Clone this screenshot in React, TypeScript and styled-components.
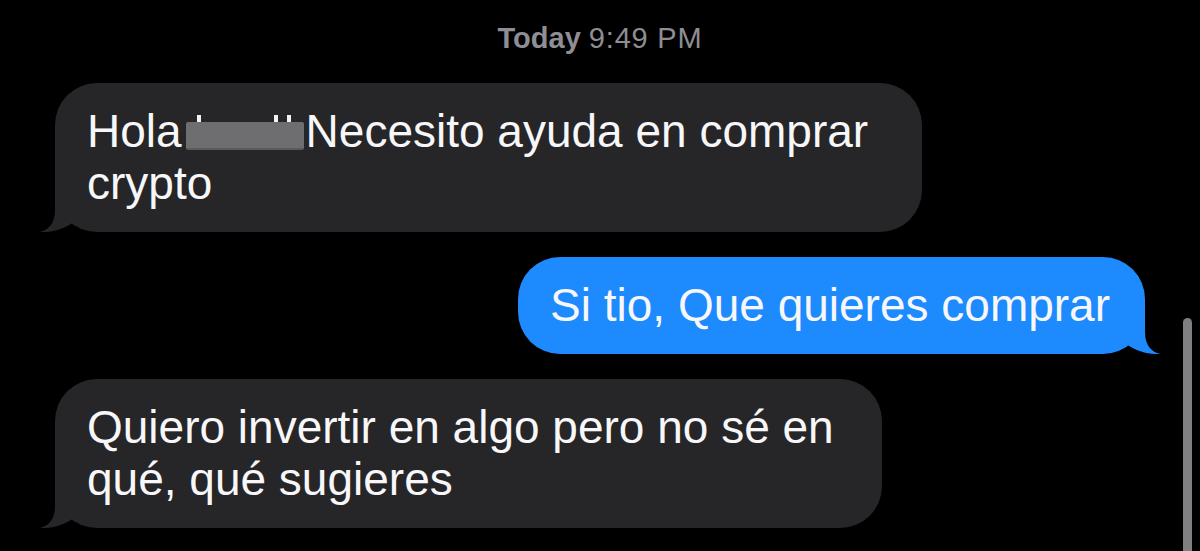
import React from "react";
import styled, { createGlobalStyle } from "styled-components";

const GlobalStyle = createGlobalStyle`
  html, body {
    margin: 0;
    padding: 0;
    background: #000;
  }
  body {
    font-family: "Liberation Sans", Arial, sans-serif;
  }
`;

const GRAY = "#262628";
const BLUE = "#1d8afd";

type MessageT = {
  id: number;
  fromMe: boolean;
  width?: number;
  lines: React.ReactNode[];
};

const Page = styled.div`
  position: relative;
  min-height: 100vh;
  overflow: hidden;
  box-sizing: border-box;
  padding: 22px 55px 0;
  background: #000;
`;

const Timestamp = styled.div`
  text-align: center;
  font-size: 29px;
  line-height: 33px;
  color: #8e8e93;
`;

const Day = styled.span`
  font-weight: 700;
`;

const Time = styled.span`
  letter-spacing: 0.8px;
`;

const Thread = styled.div`
  display: flex;
  flex-direction: column;
  gap: 25px;
  margin-top: 28px;
`;

const Bubble = styled.div<{ $fromMe: boolean; $width?: number }>`
  position: relative;
  box-sizing: border-box;
  align-self: ${(p) => (p.$fromMe ? "flex-end" : "flex-start")};
  width: ${(p) => (p.$width ? `${p.$width}px` : "fit-content")};
  padding: 22px 35px 23px 32px;
  border-radius: 42px;
  background: ${(p) => (p.$fromMe ? BLUE : GRAY)};
  color: #f7f7f9;
  font-size: 46px;
  line-height: 52px;
  white-space: nowrap;
`;

const Tail = styled.svg<{ $fromMe: boolean }>`
  position: absolute;
  bottom: 0;
  width: 36px;
  height: 46px;
  ${(p) =>
    p.$fromMe
      ? "right: -16px; transform: scaleX(-1);"
      : "left: -16px;"}
`;

const Redacted = styled.span`
  position: relative;
  display: inline-block;
  width: 118px;
  height: 28px;
  margin: 0 2px 0 4px;
  vertical-align: -3px;
  background: #6e6e71;
  border-bottom: 2px solid #5a5a5e;
  box-sizing: border-box;
  border-radius: 2px;
`;

const Tick = styled.span<{ $left: number }>`
  position: absolute;
  top: -7px;
  left: ${(p) => p.$left}px;
  width: 4px;
  height: 7px;
  background: #f2f2f4;
`;

const ScrollThumb = styled.div`
  position: absolute;
  top: 318px;
  right: 8px;
  bottom: 0;
  width: 9px;
  border-radius: 5px 5px 0 0;
  background: #7f7f82;
`;

const BubbleTail = ({ fromMe }: { fromMe: boolean }) => (
  <Tail $fromMe={fromMe} viewBox="-16 -46 36 46">
    <path
      d="M0,-46 L0,-22 C0,-8 -7,-2 -15,0 C-5,0.5 8,-2 19,-10 L19,-46 Z"
      fill={fromMe ? BLUE : GRAY}
    />
  </Tail>
);

const messages: MessageT[] = [
  {
    id: 1,
    fromMe: false,
    width: 867,
    lines: [
      <>
        Hola
        <Redacted>
          <Tick $left={11} />
          <Tick $left={88} />
          <Tick $left={101} />
        </Redacted>
        Necesito ayuda en comprar
      </>,
      "crypto",
    ],
  },
  {
    id: 2,
    fromMe: true,
    lines: ["Si tio, Que quieres comprar"],
  },
  {
    id: 3,
    fromMe: false,
    width: 827,
    lines: ["Quiero invertir en algo pero no sé en", "qué, qué sugieres"],
  },
];

const App = () => {
  return (
    <>
      <GlobalStyle />
      <Page>
        <Timestamp>
          <Day>Today</Day> <Time>9:49 PM</Time>
        </Timestamp>
        <Thread>
          {messages.map((m) => (
            <Bubble key={m.id} $fromMe={m.fromMe} $width={m.width}>
              {m.lines.map((line, i) => (
                <React.Fragment key={i}>
                  {i > 0 && <br />}
                  {line}
                </React.Fragment>
              ))}
              <BubbleTail fromMe={m.fromMe} />
            </Bubble>
          ))}
        </Thread>
        <ScrollThumb />
      </Page>
    </>
  );
};

export default App;
